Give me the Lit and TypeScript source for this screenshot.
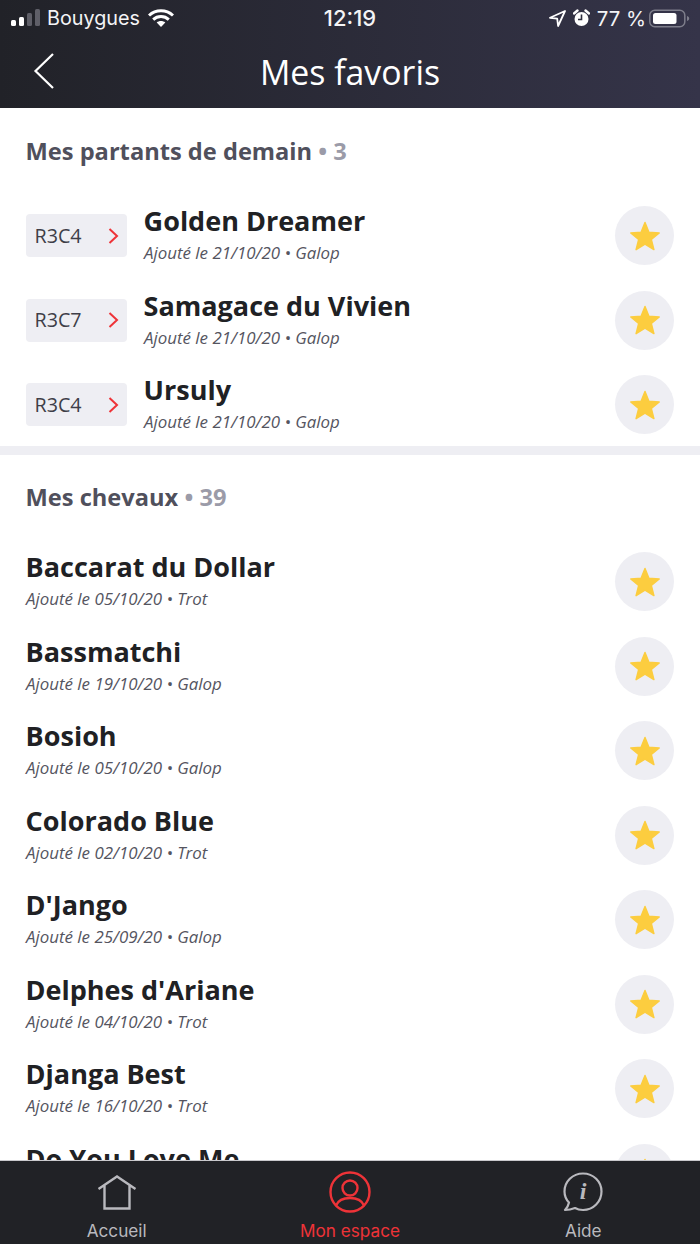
import { LitElement, html, css } from "lit";
import { customElement } from "lit/decorators.js";

const starIcon = html`<svg class="star" viewBox="0 0 32 32" width="32" height="32"><path fill="#fccd3f" stroke="#fccd3f" stroke-width="1.500" stroke-linejoin="round" d="M16 2.500l3.900 9.700 10.300.7-7.900 6.600 2.600 10.100-8.900-5.600-8.900 5.600 2.600-10.100-7.900-6.600 10.300-.7z"/></svg>`;

const partants = [
  ["R3C4", "Golden Dreamer", "Ajouté le 21/10/20 • Galop"],
  ["R3C7", "Samagace du Vivien", "Ajouté le 21/10/20 • Galop"],
  ["R3C4", "Ursuly", "Ajouté le 21/10/20 • Galop"],
];
const chevaux = [
  ["Baccarat du Dollar", "Ajouté le 05/10/20 • Trot"],
  ["Bassmatchi", "Ajouté le 19/10/20 • Galop"],
  ["Bosioh", "Ajouté le 05/10/20 • Galop"],
  ["Colorado Blue", "Ajouté le 02/10/20 • Trot"],
  ["D'Jango", "Ajouté le 25/09/20 • Galop"],
  ["Delphes d'Ariane", "Ajouté le 04/10/20 • Trot"],
  ["Djanga Best", "Ajouté le 16/10/20 • Trot"],
  ["Do You Love Me", "Ajouté le 12/10/20 • Trot"],
];

@customElement("app-root")
export class AppRoot extends LitElement {
  static styles = css`
    :host { display: block; width: 700px; height: 1244px; overflow: hidden; background: #fff; font-family: "Open Sans", sans-serif; }
    .page { display: flex; flex-direction: column; height: 1244px; }
    .top { height: 108px; flex: none; background: linear-gradient(90deg, #212228 0%, #353449 100%); color: #fff; display: flex; flex-direction: column; }
    .status { height: 36px; flex: none; display: grid; grid-template-columns: 1fr auto 1fr; align-items: center; padding: 0 9px 0 11px; font-family: Inter, sans-serif; font-size: 19.800px; color: #f4f4f6; }
    .st-left, .st-right { display: flex; align-items: center; }
    .st-right { justify-content: flex-end; }
    .carrier { margin-left: 5px; margin-right: 8px; }
    .clock { font-size: 22px; font-weight: 500; margin-right: 2px; }
    .pct { margin: 0 3px 0 7px; font-size: 20.400px; }
    .arrow { margin-right: 7px; }
    .nav { flex: 1; display: grid; grid-template-columns: 1fr auto 1fr; align-items: center; }
    .nav h1 { margin: 0 0 1px; font-size: 33.800px; font-weight: 400; line-height: 44px; color: #fff; }
    .back { display: block; margin-left: 32px; }
    .content { flex: 1; min-height: 0; overflow: hidden; }
    .section:first-child { height: 338px; }
    .section + .section { border-top: 9px solid #eeeef3; }
    .title { margin: 0; padding: 26px 25.500px 25.250px; height: 34px; line-height: 34px; font-size: 23.650px; font-weight: 700; color: #50505c; box-sizing: content-box; }
    .title span { color: #9b9ba8; }
    .section + .section .title { padding: 25px 25.500px 25.500px; }
    .row { height: 84.500px; display: flex; align-items: center; padding: 0 26px; }
    .badge { width: 101px; height: 43px; flex: none; margin-right: 17px; background: #eeeef3; border-radius: 4px; display: flex; align-items: center; justify-content: space-between; padding: 0 8px 1px 8.500px; box-sizing: border-box; font-size: 19.700px; font-weight: 500; color: #3e3e48; }
    .badge svg { margin-top: 1px; }
    .text { flex: 1; min-width: 0; display: flex; flex-direction: column; padding-bottom: 3px; }
    .name { font-size: 27px; font-weight: 700; line-height: 36px; color: #202124; white-space: nowrap; margin-left: -0.400px; }
    .sub { font-size: 16.900px; font-style: italic; line-height: 24px; color: #55555f; margin-top: 2px; white-space: nowrap; }
    .circle { width: 59px; height: 59px; flex: none; border-radius: 50%; background: #eeeef3; display: flex; align-items: center; justify-content: center; }
    .tabs { height: 84px; flex: none; background: #212226; border-top: 1px solid #c9c9cc; box-sizing: border-box; display: grid; grid-template-columns: repeat(3, 1fr); font-family: Inter, sans-serif; }
    .tab { display: flex; flex-direction: column; align-items: center; color: #b9b9be; font-size: 17.200px; line-height: 20px; padding-top: 9px; }
    .tab.on { color: #ee3338; }
    .tab svg { display: block; height: 44px; margin-bottom: 7px; flex: none; }
  `;

  private row(name: string, sub: string, badge?: string) {
    return html`<div class="row">
      ${badge ? html`<div class="badge">${badge}<svg width="12" height="18" viewBox="0 0 12 18"><path d="M2.500 2l7.500 7L2.500 16" fill="none" stroke="#ee3338" stroke-width="2"/></svg></div>` : ""}
      <div class="text"><div class="name">${name}</div><div class="sub">${sub}</div></div>
      <div class="circle">${starIcon}</div>
    </div>`;
  }

  render() {
    return html`<div class="page">
      <header class="top">
        <div class="status">
          <div class="st-left">
            <svg width="31" height="18" viewBox="0 0 31 18"><rect x="0" y="11" width="5" height="6" rx="1.500" fill="#fff"/><rect x="8" y="8" width="5" height="9" rx="1.500" fill="#fff"/><rect x="16" y="4" width="5" height="13" rx="1.500" fill="#5f5f68"/><rect x="24" y="0" width="5" height="17" rx="1.500" fill="#5f5f68"/></svg>
            <span class="carrier">Bouygues</span>
            <svg width="26" height="19" viewBox="0 0 26 19"><path d="M1 6.500C7.800 0.200 18.200 0.200 25 6.500" fill="none" stroke="#fff" stroke-width="3"/><path d="M5.200 10.600c4.400-4 11.200-4 15.600 0" fill="none" stroke="#fff" stroke-width="3"/><path d="M13 18l-4.300-4.400c2.400-2 6.200-2 8.600 0z" fill="#fff"/></svg>
          </div>
          <div class="clock">12:19</div>
          <div class="st-right">
            <svg class="arrow" width="17" height="17" viewBox="0 0 17 17"><path d="M16 1L1 7.800l7.200.9.900 7.300z" fill="none" stroke="#fff" stroke-width="1.800" stroke-linejoin="round"/></svg>
            <svg width="17" height="18" viewBox="0 0 17 18"><circle cx="8.500" cy="10" r="7" fill="#fff"/><path d="M8.500 5.500V10.500H5" fill="none" stroke="#2f2f3f" stroke-width="1.600"/><path d="M1 4.500L4.500 1.500M16 4.500L12.500 1.500" stroke="#fff" stroke-width="2.400" stroke-linecap="round"/></svg>
            <span class="pct">77 %</span>
            <svg width="42" height="19" viewBox="0 0 42 19"><rect x="0.800" y="1.300" width="35" height="16.400" rx="5" fill="none" stroke="#7d7d8a" stroke-width="1.500"/><rect x="4" y="4" width="23.500" height="11" rx="2.500" fill="#fff"/><path d="M38 7v5c1.500-.4 2.200-1.300 2.200-2.500S39.500 7.400 38 7z" fill="#7d7d8a"/></svg>
          </div>
        </div>
        <div class="nav">
          <svg class="back" width="24" height="38" viewBox="0 0 24 38"><path d="M21 1L3.500 18 21 35" fill="none" stroke="#fff" stroke-width="2.200"/></svg>
          <h1>Mes favoris</h1>
          <div></div>
        </div>
      </header>
      <main class="content">
        <section class="section">
          <h2 class="title">Mes partants de demain <span>• 3</span></h2>
          ${partants.map((p) => this.row(p[1], p[2], p[0]))}
        </section>
        <section class="section">
          <h2 class="title">Mes chevaux <span>• 39</span></h2>
          ${chevaux.map((c) => this.row(c[0], c[1]))}
        </section>
      </main>
      <nav class="tabs">
        <div class="tab">
          <svg width="40" height="44" viewBox="0 0 40 44"><path d="M1.500 19L20 6.500 38.500 19M7.500 15.500V38.500H32.500V15.500" fill="none" stroke="currentColor" stroke-width="2.400"/></svg>
          <span>Accueil</span>
        </div>
        <div class="tab on">
          <svg width="44" height="44" viewBox="0 0 44 44"><circle cx="22" cy="22" r="19.500" fill="none" stroke="currentColor" stroke-width="2.400"/><circle cx="22" cy="18" r="7.500" fill="none" stroke="currentColor" stroke-width="2.400"/><path d="M8 35.500c2.500-6 8-7.500 14-7.500s11.500 1.500 14 7.500" fill="none" stroke="currentColor" stroke-width="2.400"/></svg>
          <span>Mon espace</span>
        </div>
        <div class="tab">
          <svg width="40" height="44" viewBox="0 0 40 44"><path d="M6 32.500C2.500 29 1.500 25.500 1.500 21.500 1.500 11.500 9.500 3.500 20 3.500s18.500 8 18.500 18-8 18.500-18.500 18.500c-3.300 0-6-.8-8-2-2.500 1-6 2-10 2 2.500-2.500 3.500-5 4-7.500z" fill="none" stroke="currentColor" stroke-width="2.200" stroke-linejoin="round"/><text x="20" y="29" text-anchor="middle" font-family="Liberation Serif, serif" font-style="italic" font-weight="700" font-size="24" fill="currentColor">i</text></svg>
          <span>Aide</span>
        </div>
      </nav>
    </div>`;
  }
}
